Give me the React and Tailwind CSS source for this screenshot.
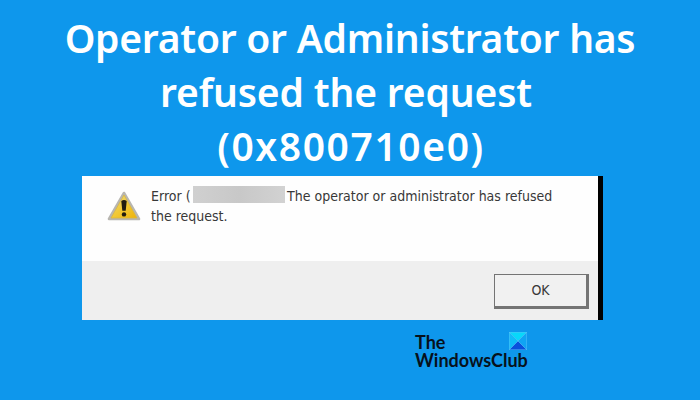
function WarningIcon() {
  return (
    <svg viewBox="0 0 34 32" className="h-8 w-[34px]" aria-label="Warning">
      <defs>
        <linearGradient id="fill" x1="0" y1="0" x2="1" y2="1">
          <stop offset="0" stopColor="#e4dc9a" />
          <stop offset="0.5" stopColor="#f2c936" />
          <stop offset="1" stopColor="#eeb308" />
        </linearGradient>
      </defs>
      <path d="M17 3 L32 29 H2 Z" fill="#b8b6b0" stroke="#b8b6b0" strokeWidth="2.6" strokeLinejoin="round" />
      <path d="M17 5 L30 28 H4 Z" fill="url(#fill)" stroke="#dcb83e" strokeWidth="0.8" strokeLinejoin="round" />
      <path d="M14.3 11 Q17 9.2 19.7 11 L18.7 20.8 H15.3 Z" fill="#211c10" />
      <circle cx="17" cy="24.4" r="2.2" fill="#211c10" />
    </svg>
  );
}

function LogoMark() {
  return (
    <svg viewBox="0 0 18 18" className="h-[18px] w-[18px]">
      <rect width="18" height="18" fill="#22b4f8" />
      <path d="M0 0 H18 L9 9 Z" fill="#08d8fa" />
      <path d="M0 0 L9 9 L0 18 Z" fill="#10bcf8" />
      <path d="M18 0 V18 L9 9 Z" fill="#10a4f4" />
      <path d="M0 18 L9 9 L18 18 Z" fill="#0a50dc" />
      <path d="M0.3 0.3 H17.7 V17.7 H0.3 Z M0 18 L18 0 M0 0 L18 18" fill="none" stroke="#58c0f6" strokeWidth="0.6" />
    </svg>
  );
}

export default function App() {
  return (
    <div className="flex h-[400px] w-[700px] flex-col overflow-hidden bg-[#0e97ec]">
      {/* HEADLINE */}
      <h1 className="flex h-[176px] flex-col items-center pt-[11px] font-['Noto_Sans','Open_Sans',sans-serif] text-[39px] leading-[54px] font-[650] whitespace-nowrap text-white">
        <span className="tracking-[-0.25px]">Operator or Administrator has</span>
        <span className="mr-2 tracking-[-0.15px]">refused the request</span>
        <span className="pl-[2px] tracking-[1.6px]">(0x800710e0)</span>
      </h1>

      {/* DIALOG */}
      <div className="ml-[82px] flex h-36 w-[521px] shrink-0 flex-col border-r-[5px] border-black bg-[#efefef] font-['DejaVu_Sans_Condensed','DejaVu_Sans',sans-serif] text-[#383838]">
        <div className="flex h-[85px] bg-[#fefefe] pl-[25px]">
          <div className="pt-[14px]">
            <WarningIcon />
          </div>
          <div className="pt-[10px] pl-[10px] text-[14px] leading-[20px] whitespace-nowrap">
            <div className="flex">
              <span className="w-[42px]">Error (</span>
              <span className="mr-[2px] h-[17px] w-[92px] bg-linear-to-r from-[#d0d0d0] via-[#c8c8c8] to-[#d2d2d2]" />
              <span>The operator or administrator has refused</span>
            </div>
            <div>the request.</div>
          </div>
        </div>
        <div className="flex justify-end pt-[13px] pr-[9px]">
          <button className="h-[35px] w-[95px] border-t border-r-[3px] border-b-[3px] border-l border-[#747474] bg-[#f1f1f1] text-[14px]">
            OK
          </button>
        </div>
      </div>

      {/* LOGO */}
      <div className="mt-3 ml-[415px] w-28 font-['Lato','Noto_Sans',sans-serif] text-[18px] leading-[18px] font-bold text-[#07111c]">
        <div className="flex h-[18px] items-start justify-between">
          <span className="pt-px">The</span>
          <LogoMark />
        </div>
        <div className="pt-px">WindowsClub</div>
      </div>
    </div>
  );
}
